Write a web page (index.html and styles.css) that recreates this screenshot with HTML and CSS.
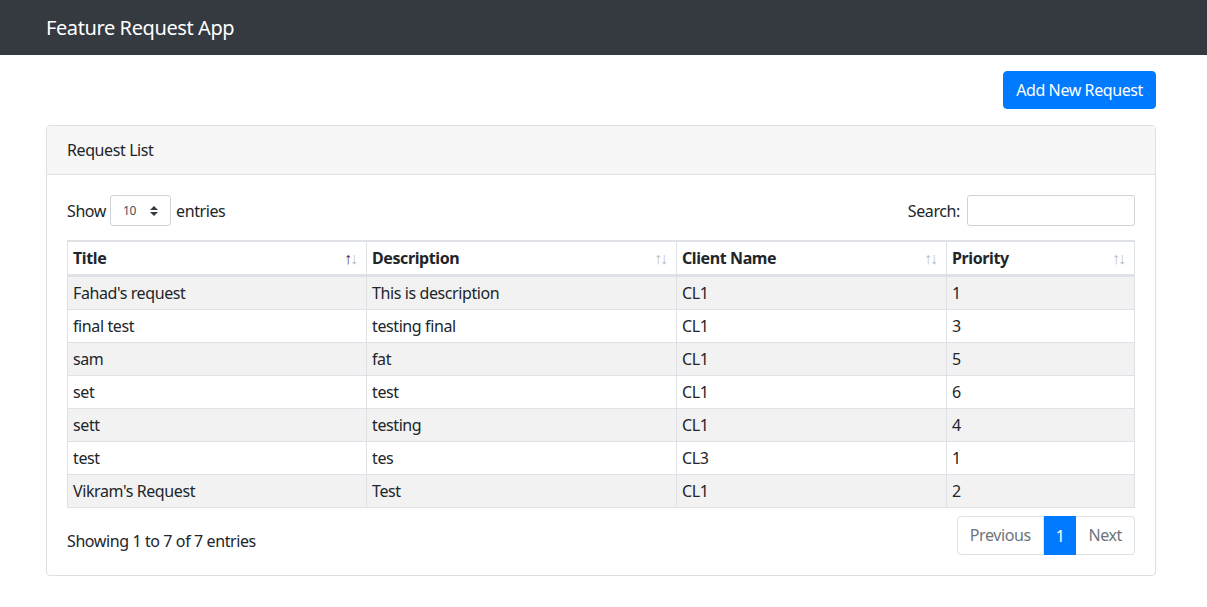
FILE: index.html
```html
<!DOCTYPE html>
<html lang="en">
<head>
<meta charset="utf-8">
<title>Feature Request App</title>
<link rel="stylesheet" href="styles.css">
</head>
<body>
<nav class="navbar">
  <div class="container">
    <span class="brand">Feature Request App</span>
  </div>
</nav>
<main class="container">
  <div class="actions">
    <button class="btn-primary" type="button">Add New Request</button>
  </div>
  <section class="card">
    <div class="card-header">Request List</div>
    <div class="card-body">
      <div class="dt-top">
        <label class="length">Show
          <span class="select">10
            <svg class="select-arrows" width="8" height="10" viewBox="0 0 8 10"><path d="M4 0 L8 4 H0 Z M4 10 L8 6 H0 Z" fill="#343a40"/></svg>
          </span>
          entries</label>
        <label class="filter">Search:<input class="search" type="search"></label>
      </div>
      <table class="dt">
        <thead>
          <tr>
            <th class="c1"><div class="th-inner"><span>Title</span><span class="sort"><span class="up active">↑</span><span class="down">↓</span></span></div></th>
            <th class="c2"><div class="th-inner"><span>Description</span><span class="sort"><span class="up">↑</span><span class="down">↓</span></span></div></th>
            <th class="c3"><div class="th-inner"><span>Client Name</span><span class="sort"><span class="up">↑</span><span class="down">↓</span></span></div></th>
            <th class="c4"><div class="th-inner"><span>Priority</span><span class="sort"><span class="up">↑</span><span class="down">↓</span></span></div></th>
          </tr>
        </thead>
        <tbody>
          <tr class="odd"><td>Fahad's request</td><td>This is description</td><td>CL1</td><td>1</td></tr>
          <tr><td>final test</td><td>testing final</td><td>CL1</td><td>3</td></tr>
          <tr class="odd"><td>sam</td><td>fat</td><td>CL1</td><td>5</td></tr>
          <tr><td>set</td><td>test</td><td>CL1</td><td>6</td></tr>
          <tr class="odd"><td>sett</td><td>testing</td><td>CL1</td><td>4</td></tr>
          <tr><td>test</td><td>tes</td><td>CL3</td><td>1</td></tr>
          <tr class="odd"><td>Vikram's Request</td><td>Test</td><td>CL1</td><td>2</td></tr>
        </tbody>
      </table>
      <div class="dt-bottom">
        <div class="info">Showing 1 to 7 of 7 entries</div>
        <ul class="pagination">
          <li class="page prev disabled">Previous</li>
          <li class="page active">1</li>
          <li class="page next disabled">Next</li>
        </ul>
      </div>
    </div>
  </section>
</main>
</body>
</html>
```
FILE: styles.css
```css
* { box-sizing: border-box; }
html, body { margin: 0; padding: 0; }
body {
  font-family: "Noto Sans", "Open Sans", sans-serif;
  font-size: 16px;
  line-height: 1.5;
  letter-spacing: -0.025em;
  color: #212529;
  background: #fff;
}
.container {
  width: 1110px;
  margin-left: 46px;
}
.navbar {
  background: #343a40;
  height: 55px;
  display: flex;
  align-items: center;
}
.brand {
  color: #fff;
  font-size: 20px;
  line-height: 30px;
}
.actions {
  display: flex;
  justify-content: flex-end;
  padding-top: 16px;
  margin-bottom: 16px;
}
.btn-primary {
  font-family: inherit;
  font-size: 16px;
  letter-spacing: inherit;
  line-height: 24px;
  padding: 6px 12px;
  color: #fff;
  background: #007bff;
  border: 1px solid #007bff;
  border-radius: 4px;
}
.card {
  border: 1px solid #dfdfdf;
  border-radius: 4px;
}
.card-header {
  padding: 12px 20px;
  background: #f7f7f7;
  border-bottom: 1px solid #dfdfdf;
  border-radius: 3px 3px 0 0;
  line-height: 24px;
}
.card-body {
  padding: 20px;
}
.dt-top {
  display: flex;
  justify-content: space-between;
  align-items: center;
  height: 31px;
  margin-bottom: 14px;
}
.length, .filter {
  display: flex;
  align-items: center;
  white-space: nowrap;
}
.select {
  display: inline-flex;
  align-items: center;
  justify-content: space-between;
  width: 61px;
  height: 31px;
  margin: 0 5px 0 4px;
  padding: 0 12px 0 12px;
  border: 1px solid #ced4da;
  border-radius: 3px;
  font-size: 12px;
  color: #495057;
}
.select-arrows { display: block; }
.search {
  width: 168px;
  height: 31px;
  margin-left: 7px;
  border: 1px solid #ced4da;
  border-radius: 3px;
  font-size: 14px;
  padding: 4px 8px;
}
.dt {
  width: 100%;
  table-layout: fixed;
  border-collapse: separate;
  border-spacing: 0;
  border-top: 1px solid #dee2e6;
  border-right: 1px solid #dee2e6;
  border-bottom: 1px solid #dee2e6;
}
.dt th, .dt td {
  padding: 4px 5px 4px 5px;
  border-top: 1px solid #dee2e6;
  border-left: 1px solid #dee2e6;
  text-align: left;
  vertical-align: top;
  line-height: 24px;
  white-space: nowrap;
}
.dt th {
  border-bottom: 2px solid #dee2e6;
  font-weight: 700;
  padding-right: 8px;
}
.c1 { width: 299px; }
.c2 { width: 310px; }
.c3 { width: 270px; }
.c4 { width: 188px; }
.th-inner {
  display: flex;
  justify-content: space-between;
  align-items: center;
}
.sort {
  display: flex;
  font-weight: 400;
  font-size: 16px;
  letter-spacing: 0;
  color: #212529;
}
.sort span { opacity: 0.3; }
.sort .active { opacity: 1; color: #5a1f45; }
.sort .down { margin-left: -2px; }
.dt tbody tr.odd td { background: #f2f2f2; }
.dt-bottom {
  display: flex;
  justify-content: space-between;
  align-items: flex-start;
  margin-top: 8px;
}
.info {
  padding-top: 13px;
  line-height: 24px;
}
.pagination {
  display: flex;
  list-style: none;
  margin: 0;
  padding: 0;
}
.page {
  padding: 8px 12px;
  line-height: 20px;
  border: 1px solid #dee2e6;
  color: #6c757d;
  background: #fff;
}
.page.prev { border-radius: 4px 0 0 4px; }
.page.next { border-left: 0; border-radius: 0 4px 4px 0; }
.page.active {
  color: #fff;
  background: #007bff;
  border-color: #007bff;
  border-left: 0;
  border-right: 0;
  padding: 9px 12px 8px;
}
```
